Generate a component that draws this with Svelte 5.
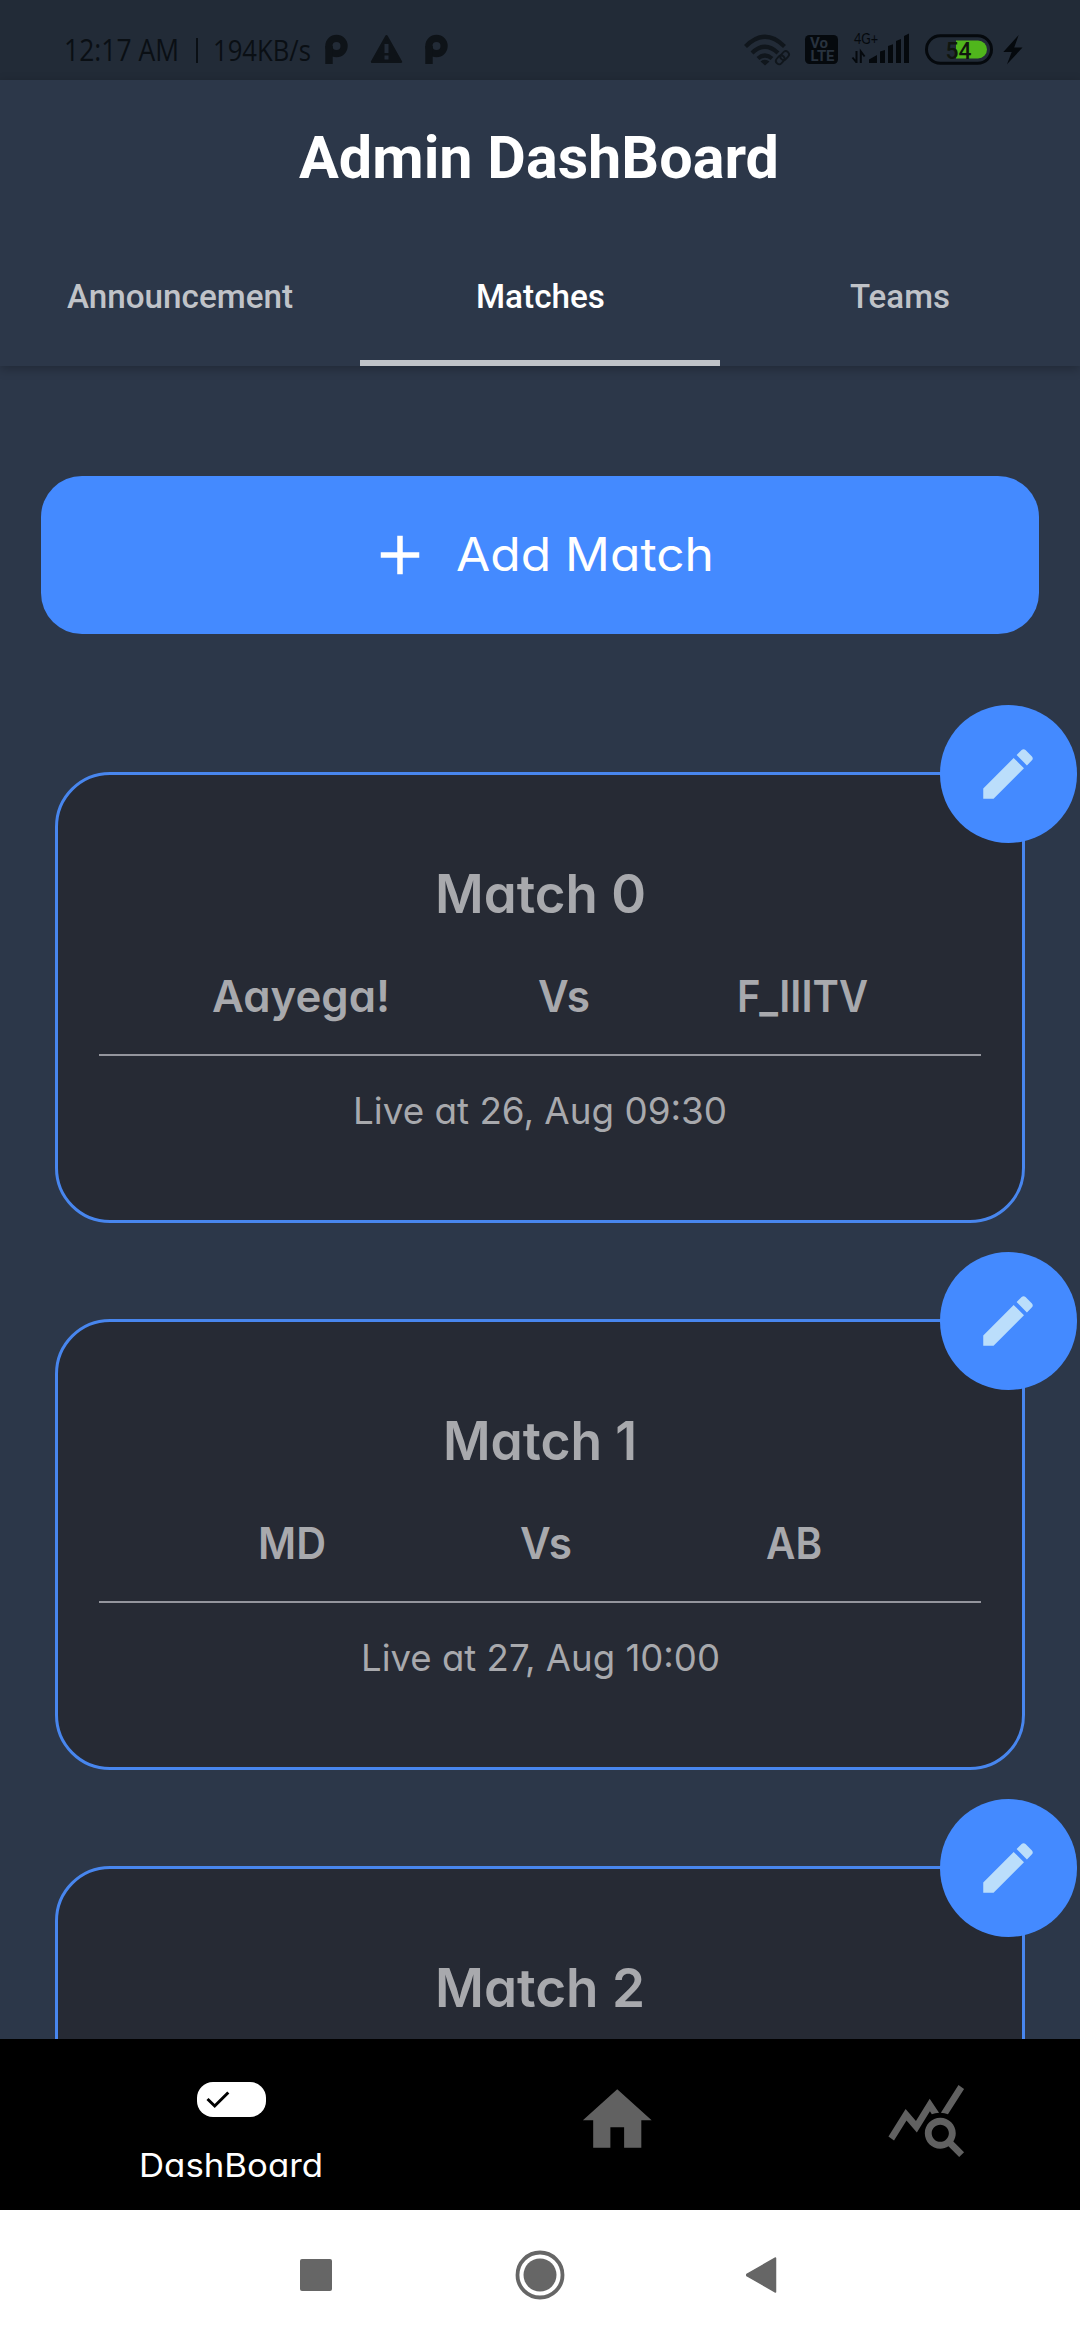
<script>
  const tabs = [
    { label: 'Announcement', width: 226 },
    { label: 'Matches', width: 129 },
    { label: 'Teams', width: 100 }
  ];

  const matches = [
    {
      title: ['Match 0', 211],
      home: ['Aayega!', 178],
      away: ['F_IIITV', 131],
      live: ['Live at 26, Aug 09:30', 374]
    },
    {
      title: ['Match 1', 194],
      home: ['MD', 68],
      away: ['AB', 56],
      live: ['Live at 27, Aug 10:00', 359]
    },
    { title: ['Match 2', 210] }
  ];
</script>

{#snippet label(text, width, size, kind)}
  <svg class="label {kind}" {width} height={size * 1.4} viewBox="0 0 {width} {size * 1.4}">
    <text x="0" y={size} font-size={size} textLength={width} lengthAdjust="spacingAndGlyphs">{text}</text>
  </svg>
{/snippet}

{#snippet parking()}
  <svg class="glyph" width="23" height="31" viewBox="0 0 23 31">
    <circle cx="11.5" cy="12" r="7.6" fill="none" stroke="currentColor" stroke-width="7.2" />
    <rect x="0.3" y="12" width="7.4" height="18" fill="currentColor" />
  </svg>
{/snippet}

<div class="screen">
  <div class="status">
    <div class="left">
      {@render label('12:17 AM', 115, 31, 'clock')}
      <span class="bar"></span>
      {@render label('194KB/s', 98, 29, 'speed')}
      {@render parking()}
      <svg class="glyph warn" width="33" height="30" viewBox="0 0 33 30">
        <path d="M16.5 2.2 31 27.8H2Z" fill="currentColor" stroke="currentColor" stroke-width="2.4" stroke-linejoin="round" />
        <path d="M16.5 10v9M16.5 21.5v4" stroke="#222b37" stroke-width="4" />
      </svg>
      {@render parking()}
    </div>
    <div class="right">
      <svg class="glyph" width="48" height="32" viewBox="744 33 48 32">
        <g fill="none" stroke="currentColor" stroke-width="4.2">
          <path d="M745.5 45.5Q765 26 784.500 45.500" />
          <path d="M752 52Q765 39.500 778 52" />
          <path d="M758 57.500Q765 51.500 772 57.500" />
        </g>
        <path d="M765 64.500 760.500 60.500Q765 57 769.500 60.500Z" fill="currentColor" />
        <g fill="none" stroke="currentColor" stroke-width="1.8">
          <rect x="781.500" y="49.800" width="6.500" height="9.500" rx="3.200" transform="rotate(42 784.700 54.500)" />
          <rect x="777" y="54" width="6.500" height="9.500" rx="3.200" transform="rotate(42 780.200 58.700)" />
        </g>
      </svg>
      <svg class="black volte" width="33" height="30" viewBox="0 0 33 30">
        <rect x="0" y="1" width="33" height="29" rx="4.500" fill="currentColor" />
        <text x="5" y="14" textLength="18" lengthAdjust="spacingAndGlyphs">Vo</text>
        <text x="5.500" y="26.500" textLength="24" lengthAdjust="spacingAndGlyphs">LTE</text>
      </svg>
      <svg class="black signal" width="58" height="32" viewBox="852 33 58 32">
        <text x="854" y="44" textLength="24" lengthAdjust="spacingAndGlyphs">4G+</text>
        <path d="M856.500 51v12M852.500 57.500l4 5M860.800 63V51.500l3.800 5" fill="none" stroke="currentColor" stroke-width="2" />
        <path d="M869 63v-3.500L877 55v8ZM880 63V51.500l5-1.500v13ZM888 63V46l5-1.800V63ZM896 63V41l5-2V63ZM904 63V36l5-2.500V63Z" fill="currentColor" />
      </svg>
      <svg class="black battery" width="68" height="31" viewBox="925 33.500 68 31">
        <rect x="926.500" y="35.300" width="65" height="27.400" rx="13.700" fill="none" stroke="currentColor" stroke-width="3" />
        <path d="M956 40h22a9 9 0 0 1 0 18h-22z" fill="#50b61c" />
        <text x="945.500" y="58" textLength="26" lengthAdjust="spacingAndGlyphs">54</text>
      </svg>
      <svg class="black" width="20" height="31" viewBox="0 0 20 31">
        <path d="M15.700 1 .300 18h8.400L4 30.300 19.500 13.500h-8.300Z" fill="currentColor" />
      </svg>
    </div>
  </div>

  <header>
    <h1>{@render label('Admin DashBoard', 480, 60, 'title')}</h1>
    <nav class="tabs">
      {#each tabs as tab, i}
        <div class="tab" class:active={i === 1}>{@render label(tab.label, tab.width, 34, 'tabtext')}</div>
      {/each}
    </nav>
  </header>

  <main>
    <div class="add">
      <svg width="66" height="66" viewBox="0 0 24 24"><path d="M19 13h-6v6h-2v-6H5v-2h6V5h2v6h6v2z" fill="#fff" /></svg>
      {@render label('Add Match', 258, 46, 'poppy')}
    </div>

    {#each matches as m}
      <section class="card">
        <div class="heading">{@render label(m.title[0], m.title[1], 53, 'poppy strong')}</div>
        {#if m.live}
          <div class="teams">
            {@render label(m.home[0], m.home[1], 44, 'poppy strong')}
            {@render label('Vs', 52, 44, 'poppy strong')}
            {@render label(m.away[0], m.away[1], 44, 'poppy strong')}
          </div>
          <hr />
          <div class="live">{@render label(m.live[0], m.live[1], 37, 'poppy')}</div>
        {/if}
        <div class="edit">
          <svg width="66" height="66" viewBox="0 0 24 24">
            <path d="M3 17.250V21h3.750L17.810 9.940l-3.750-3.750L3 17.250zM20.710 7.040c.390-.390.390-1.020 0-1.410l-2.340-2.340c-.390-.390-1.020-.390-1.410 0l-1.830 1.830 3.750 3.750 1.830-1.830z" fill="#bbdefb" />
          </svg>
        </div>
      </section>
    {/each}
  </main>

  <footer>
    <div class="item dash">
      <svg width="69" height="35" viewBox="0 0 69 35">
        <rect width="69" height="35" rx="16" fill="#fff" />
        <path d="M10.500 17 17.700 24 31.300 10.500" fill="none" stroke="#000" stroke-width="3" />
      </svg>
      {@render label('DashBoard', 184, 32.5, 'poppy')}
    </div>
    <svg class="home" width="82.5" height="82.5" viewBox="0 0 24 24"><path d="M10 20v-6h4v6h5v-8h3L12 3 2 12h3v8z" fill="#616161" /></svg>
    <svg class="stats" width="82.5" height="82.5" viewBox="0 0 24 24">
      <path d="M19.880 18.470c.440-.700.700-1.510.700-2.390 0-2.490-2.010-4.500-4.500-4.500s-4.500 2.010-4.500 4.500 2.010 4.500 4.490 4.500c.880 0 1.700-.260 2.390-.700L21.580 23 23 21.580l-3.120-3.110zM16.080 18.580c-1.380 0-2.500-1.120-2.500-2.500s1.120-2.500 2.500-2.500 2.500 1.120 2.500 2.500-1.120 2.500-2.500 2.500zM15.720 10.080c-.740.020-1.450.180-2.100.450l-.550-.830-3.800 6.180-3.010-3.520-3.630 5.810L1 17l5-8 3 3.500L13 6l2.720 4.080zM18.310 10.580c-.640-.280-1.330-.450-2.050-.490L21.380 2 23 3.180l-4.690 7.400z" fill="#616161" />
    </svg>
  </footer>

  <div class="system">
    <svg width="32" height="32" viewBox="0 0 32 32"><rect width="32" height="32" rx="2" fill="#666" /></svg>
    <svg width="50" height="50" viewBox="0 0 50 50">
      <circle cx="25" cy="25" r="22.500" fill="none" stroke="#666" stroke-width="3.800" />
      <circle cx="25" cy="25" r="16.500" fill="#666" />
    </svg>
    <svg width="32" height="38" viewBox="0 0 32 38"><path d="M30.500 2v34L1.800 19.700V18.300Z" fill="#666" stroke="#666" stroke-width="1.500" stroke-linejoin="round" /></svg>
  </div>
</div>

<style>
  :global(body) { margin: 0; background: #2c3749; }
  .screen {
    width: 1080px; height: 2340px; overflow: hidden;
    display: flex; flex-direction: column; background: #2c3749;
  }
  svg { display: block; flex: none; overflow: visible; }
  .label { fill: currentColor; }

  .status {
    height: 80px; flex: none; box-sizing: border-box;
    display: flex; justify-content: space-between; align-items: flex-start;
    padding: 34px 57px 0 63.500px; background: #222b37;
  }
  .left, .right { display: flex; align-items: flex-start; }
  .left { color: #0a0f14; font-family: "Open Sans", sans-serif; }
  .left .glyph { color: #0e1318; margin-left: 14px; }
  .left .warn { margin: 0 3px 0 22px; }
  .left .warn + .glyph { margin-left: 19px; }
  .clock { margin-top: -4.500px; }
  .speed { margin-top: -2.500px; }
  .bar { width: 2.5px; height: 25px; margin: 4px 15px 0 17px; background: #0a0f14; }
  .right .glyph { color: #10161c; }
  .black { color: #05090d; }
  .volte { margin: 0 14px 0 13px; }
  .volte text { fill: #28323e; font: bold 14px Roboto, sans-serif; }
  .signal { margin-top: -1px; margin-right: 15px; }
  .signal text { fill: currentColor; font: 15px Lato, sans-serif; }
  .battery { margin-right: 10px; }
  .battery text { fill: #10160f; font: 500 24.5px Roboto, sans-serif; }

  header {
    height: 286px; flex: none; position: relative;
    display: flex; flex-direction: column; justify-content: space-between;
    box-shadow: 0 3px 10px rgba(0, 0, 0, 0.25);
    font-family: Roboto, sans-serif; color: #fff;
  }
  h1 { margin: 38px 2px 0 0; display: flex; justify-content: center; }
  .title { font-weight: 700; }
  .tabs { display: flex; height: 132px; }
  .tab {
    flex: 1; box-sizing: border-box; padding-top: 40px;
    display: flex; justify-content: center; border-bottom: 6px solid transparent;
    color: #c0c3c8; font-weight: 500;
  }
  .tab.active { color: #fff; border-bottom-color: #c0c3c8; }

  main {
    flex: 1; min-height: 0; overflow: hidden;
    font-family: Inter, sans-serif;
  }
  .poppy { font-feature-settings: "cv11" 1; font-weight: 400; }
  .strong { font-weight: 600; }
  .add {
    height: 158px; margin: 110px 41px 0; border-radius: 41px;
    display: flex; align-items: center; gap: 23px; box-sizing: border-box;
    padding-left: 325.500px; background: #448aff; color: #fff;
  }
  .add .label { margin-top: 5px; }
  .card {
    position: relative; box-sizing: border-box; height: 451px;
    margin: 96px 55px 0; border: 3px solid #4886ee; border-radius: 55px;
    background: #262a34; color: #a8a9ad;
  }
  .add + .card { margin-top: 138px; }
  .heading, .live { display: flex; justify-content: center; }
  .heading { padding-top: 85px; }
  .teams { display: flex; justify-content: space-evenly; padding: 0 6px; margin-top: 34px; height: 62px; }
  hr { height: 2px; margin: 24px 41px 0; border: 0; background: #94959d; }
  .live { margin-top: 31px; }
  .edit {
    position: absolute; right: -55px; top: -70px; width: 137.500px; height: 137.500px;
    border-radius: 50%; background: #448aff;
    display: flex; align-items: center; justify-content: center;
  }

  footer {
    height: 171px; flex: none; display: flex; align-items: flex-start; background: #000;
    font-family: Inter, sans-serif; color: #fff;
  }
  .dash {
    display: flex; flex-direction: column; align-items: center;
    width: 184px; padding: 43px 0 0 139px; gap: 26.500px;
  }
  .home { margin: 40px 0 0 253px; }
  .stats { margin: 39px 0 0 226px; }

  .system {
    height: 130px; flex: none; display: flex; align-items: center; background: #fff;
    padding-left: 300px; gap: 183px;
  }
  .system svg:last-child { margin-left: -3px; }
</style>
